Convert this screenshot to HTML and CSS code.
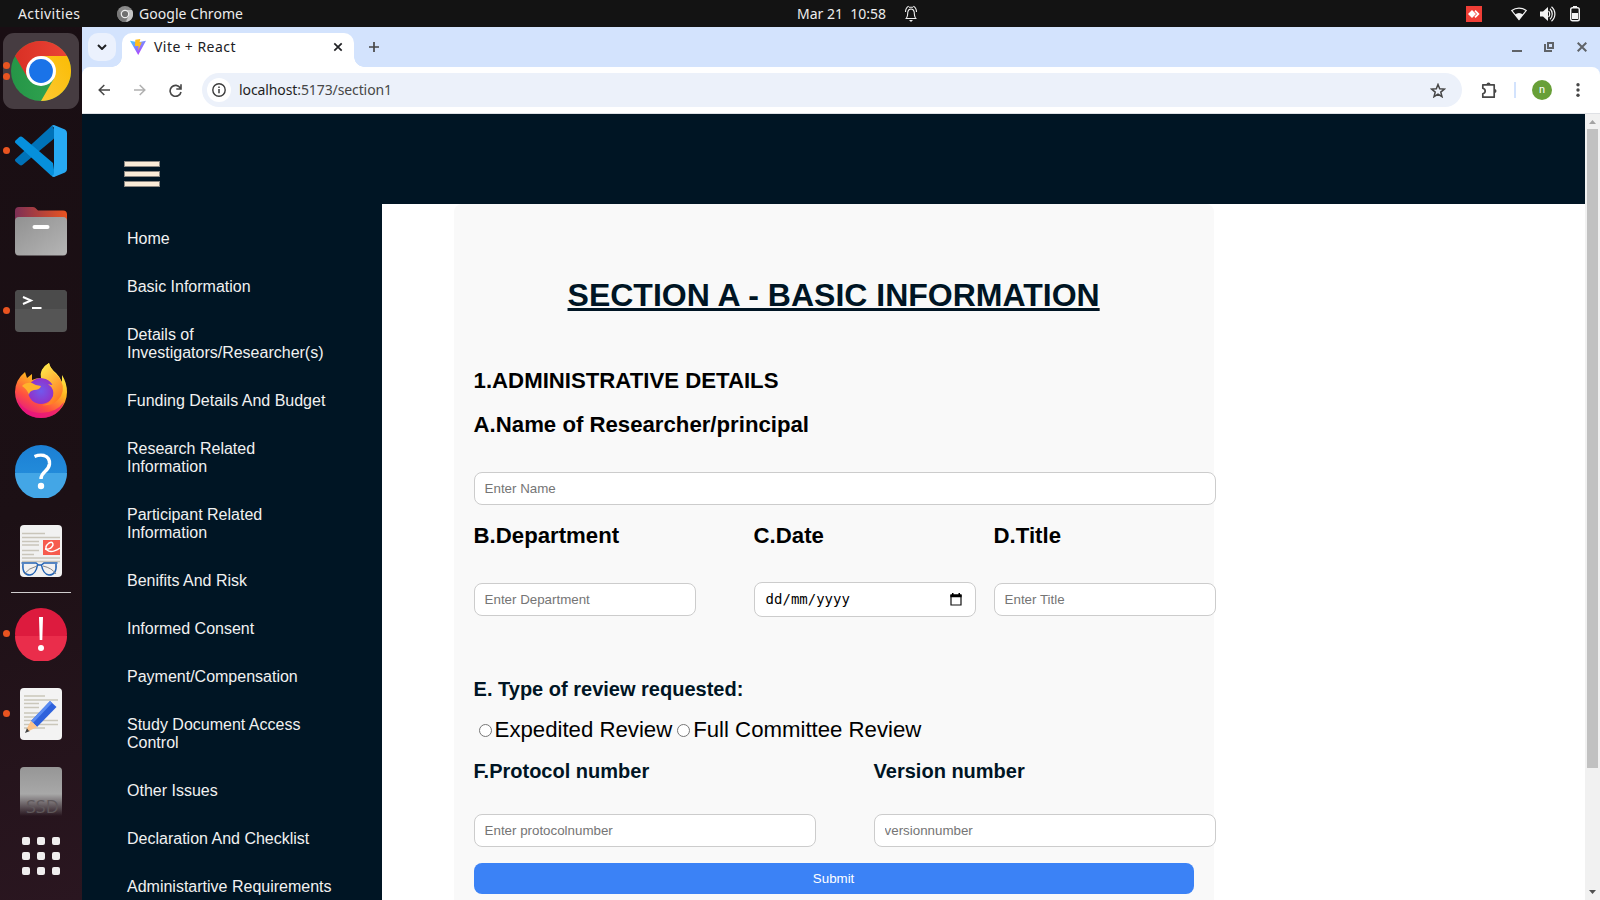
FILE: index.html
```html
<!DOCTYPE html>
<html lang="en">
<head>
<meta charset="utf-8">
<title>Vite + React</title>
<link rel="stylesheet" href="styles.css">
</head>
<body>
<header class="topbar">
  <div class="top-left">
    <span class="activities">Activities</span>
    <svg class="top-chrome" width="16" height="16" viewBox="0 0 16 16"><circle cx="8" cy="8" r="8" fill="#8a8a8a"/><path d="M8 4h7a8 8 0 0 1-6 12l2.500-6z" fill="#c4c4c4"/><path d="M1.300 4A8 8 0 0 0 7.500 16L10 12 5 10z" fill="#777"/><circle cx="8" cy="8" r="3.700" fill="#707070" stroke="#eee" stroke-width="1.200"/></svg>
    <span class="appname">Google Chrome</span>
  </div>
  <div class="top-center">
    <span class="clock">Mar 21&nbsp; 10:58</span>
    <svg width="14" height="18" viewBox="0 0 14 18" fill="none" stroke="#eee" stroke-width="1.100"><path d="M1.500 13.500h11M2.500 13c1.500-2 1-4 1.300-6C4.300 4.500 5.500 4 7 4s2.700.5 3.200 3c.3 2-.2 4 1.300 6"/><path d="M1.500 7c0-3.500 1.500-5 3.200-5.800M12.500 7c0-3.500-1.500-5-3.200-5.800M5 2.200h4"/><path d="M5 15h4l-2 2z" fill="#eee" stroke="none"/></svg>
  </div>
  <div class="top-right">
    <svg class="anydesk" width="16" height="16" viewBox="0 0 16 16"><path fill="#ef3e36" d="M0 0h16v16H0z"/><path fill="#fff" d="M2 8l4-4 4 4-4 4z"/><path d="M9 4.700 12.300 8 9 11.300" fill="none" stroke="#fff" stroke-width="1.800"/></svg>
    <svg class="wifi" width="16" height="14" viewBox="0 0 16 14"><path d="M.8 3.500C5 .2 11 .2 15.200 3.500L8 12.500z" fill="none" stroke="#f2f2f2" stroke-width="1.200"/><path d="M4 7.500c2.500-2 5.500-2 8 0L8 12.800z" fill="#f2f2f2"/></svg>
    <svg class="volume" width="16" height="16" viewBox="0 0 16 16"><path d="M0 5.500h3L8 1v14l-5-4.500H0z" fill="#f2f2f2"/><path d="M8.500 5c1.600 1.500 1.600 4.500 0 6M10 2.800c3 2.700 3 7.700 0 10.400M11.500.7c4.500 4 4.500 10.600 0 14.600" fill="none" stroke="#f2f2f2" stroke-width="1.200"/></svg>
    <svg width="10" height="16" viewBox="0 0 10 16"><path d="M3 0h4v2H3zM2 7h6v6H2z" fill="#f2f2f2"/><rect x=".7" y="1.700" width="8.600" height="13" rx="1.800" fill="none" stroke="#f2f2f2" stroke-width="1.400"/></svg>
  </div>
</header>
<div class="desktop">
  <aside class="dock">
    <div class="slot active">
      <i class="dot d1"></i><i class="dot d2"></i>
      <svg width="60" height="60" viewBox="0 0 60 60"><defs><linearGradient id="cr"><stop stop-color="#d93025"/><stop offset="1" stop-color="#ea4335"/></linearGradient><linearGradient id="cy" x1="0" y1="1" x2="1" y2="0"><stop stop-color="#fcc934"/><stop offset="1" stop-color="#fbbc04"/></linearGradient><linearGradient id="cg"><stop stop-color="#259547"/><stop offset="1" stop-color="#34a853"/></linearGradient></defs><circle cx="30" cy="30" r="30" fill="url(#cg)"/><path d="M4 15a30 30 0 0 1 52 0H30L17 37.500z" fill="url(#cr)"/><path d="M30 15h26A30 30 0 0 1 30 60l13-22.500z" fill="url(#cy)"/><circle cx="30" cy="30" r="15" fill="#fff"/><circle cx="30" cy="30" r="11.900" fill="#1a73e8"/></svg>
    </div>
    <div class="slot"><i class="dot"></i>
      <svg width="52" height="52" viewBox="0 0 52 52"><path d="M37 .5 42 10 38 14.500 8 39.500a3 3 0 0 1-4.200-.2L.8 36.700a2 2 0 0 1 0-3z" fill="#0072b8"/><path d="M38 38 8 12.600a3 3 0 0 0-4.200 0L.8 15.300a2 2 0 0 0 0 3L36 50.500l4 1z" fill="#0690dc"/><path d="M39 0v52q-1.500 0-2.700-1.500Q39 51 39 48V4q0-3-2.500-2.800Q37.500 0 39 0L50 4.500Q52 5.500 52 8v36q0 2.500-2 3.500L39 52z" fill="#27a9f3"/></svg>
    </div>
    <div class="slot">
      <svg width="52" height="50" viewBox="0 0 52 50"><defs><linearGradient id="fo"><stop stop-color="#7d2f55"/><stop offset="1" stop-color="#e95420"/></linearGradient><linearGradient id="fg" x2="1" y2="1"><stop stop-color="#919191"/><stop offset="1" stop-color="#b5b5b5"/></linearGradient></defs><path d="M0 5q0-4 4-4h14q2 0 3.500 2l1.500 1.500h25q4 0 4 4V20H0z" fill="url(#fo)"/><rect y="11" width="52" height="38.500" rx="4" fill="url(#fg)"/><rect x="17.500" y="19" width="17" height="4" rx="2" fill="#fff"/></svg>
    </div>
    <div class="slot"><i class="dot"></i>
      <svg width="52" height="42" viewBox="0 0 52 42"><rect width="52" height="42" rx="4" fill="#555"/><path d="M0 19V4q0-4 4-4h44q4 0 4 4v15z" fill="#4b4b4b"/><path d="m8 7 8 3.500L8 14M17 18h9.500" fill="none" stroke="#fff" stroke-width="2"/></svg>
    </div>
    <div class="slot firefox">
      <svg width="54" height="56" viewBox="0 0 54 56"><defs><linearGradient id="ff" x1=".8" y1=".1" x2=".3" y2="1"><stop stop-color="#fff44f"/><stop offset=".35" stop-color="#ffb520"/><stop offset=".7" stop-color="#ff5040"/><stop offset="1" stop-color="#e31587"/></linearGradient><linearGradient id="fy" x2=".5" y2="1"><stop stop-color="#fff44f"/><stop offset="1" stop-color="#ff7b24"/></linearGradient><radialGradient id="fp"><stop stop-color="#7059ed"/><stop offset="1" stop-color="#9132c9"/></radialGradient></defs><path d="M11 10Q12 13 13 16L18 12v6q4-2 9-2-1-10 8-15 1 5 7 10 4 4 6 9V13q5 8 5 17a26 26 0 1 1-52 0Q1 18 11 10z" fill="url(#ff)"/><circle cx="27" cy="29" r="13" fill="url(#fp)"/><path d="M35 1q-10 6-8 15 8 0 12 7-3 0-5-1 7 5 5 13-3 8-11 8 12 2 19-9 5-10-3-20Q36 7 35 1z" fill="url(#fy)"/><path d="M8 24q4-4 10-3 4 3 9 3-1 4-7 4-5 1-5 5-2-6-7-9z" fill="#ffb32b"/><path d="M3 36q7 15 24 15 15 0 23-11-6 16-23 16Q8 56 3 36z" fill="#e8127c" opacity=".7"/></svg>
    </div>
    <div class="slot">
      <svg width="54" height="54" viewBox="0 0 54 54"><defs><linearGradient id="hb" x1="0" y1="0" x2="0" y2="1"><stop stop-color="#1b7fd4"/><stop offset="1" stop-color="#2995df"/></linearGradient></defs><circle cx="27" cy="27" r="26" fill="url(#hb)"/><path d="M1 29h52a26 26 0 0 1-52 0z" fill="#43a6e6"/><path d="M20.500 12.500q5-2 9.500-1 6 2 5.500 8.500-.5 4-4.500 7.500-4 3.500-4 7.500" fill="none" stroke="#fff" stroke-width="3.400"/><circle cx="27" cy="42" r="3.200" fill="#fff"/></svg>
    </div>
    <div class="slot">
      <svg width="42" height="54" viewBox="0 0 42 54"><rect y="1" width="42" height="52" rx="4" fill="#f1f1f1"/><path d="M2 9.500h23M2 13.500h38M2 17.500h17M2 21h17M2 26.500h17M2 30.500h12M2 34h38M2 37.500h38" stroke="#c9c5ba" stroke-width="1.600"/><path fill="#f65b4e" d="M23 16h17v15H23z"/><path d="M25 25q6 1 8-4 0-4-4-2-5 4-2 7 4 4 13-2" stroke="#fff" stroke-width="1.500" fill="none"/><path d="M1.500 39H16l2.500 2h3L24 39h13.500M3 40q-1 11 7 11 6-1 7.500-10M36 40q1 11-7 11-6-1-7.500-10" stroke="#2363b4" stroke-width="1.500" fill="none"/><path d="M4 50q5-6 13-8M23 42q9 2 13 8" fill="none" stroke="#888"/></svg>
    </div>
    <div class="rule"></div>
    <div class="slot"><i class="dot"></i>
      <svg width="54" height="54" viewBox="0 0 54 54"><circle cx="27" cy="27" r="26" fill="#dd1b3e"/><path d="M1 29h52a26 26 0 0 1-52 0z" fill="#ea2d4b"/><path d="M25 10h4l-.7 23h-2.600z" fill="#fff"/><circle cx="27" cy="41" r="3" fill="#fff"/></svg>
    </div>
    <div class="slot"><i class="dot"></i>
      <svg width="42" height="54" viewBox="0 0 42 54"><rect y="1" width="42" height="52" rx="4" fill="#f3f3f3"/><path d="M4 9h21M4 13h34M4 16.500h15M4 20.500h15M4 26h15M4 30h12M4 33.500h34M4 37.500h34M4 41h21" stroke="#cac7bb" stroke-width="1.600"/><path d="M11 34 30 14l6.500 6L17 40z" fill="#2f62dc"/><path d="m11 34 6 6-9 3z" fill="#fcc38a"/><path d="m13 36 19-20-2-2-19 20z" fill="#5b8cf2"/><path d="m5 46 2-5 3 3z" fill="#444"/><path d="m11 34 6 6-8 4-2-3z" fill="#fcc38a"/></svg>
    </div>
    <div class="slot ssd">
      <svg width="42" height="49" viewBox="0 0 42 49"><defs><linearGradient id="sd" x2="0" y2="1"><stop stop-color="#969696"/><stop offset=".55" stop-color="#a8a8a8"/><stop offset="1" stop-color="#a8a8a8" stop-opacity="0"/></linearGradient></defs><path d="M0 49V4q0-4 4-4h34q4 0 4 4v45z" fill="url(#sd)"/><text x="6" y="45.500" class="ssd-text">SSD</text></svg>
    </div>
    <div class="apps"><i></i><i></i><i></i><i></i><i></i><i></i><i></i><i></i><i></i></div>
  </aside>
  <section class="browser">
    <div class="tabstrip">
      <div class="tabsearch"><svg width="10" height="6" viewBox="0 0 10 6"><path d="m1 1 4 4 4-4" fill="none" stroke="#202124" stroke-width="2"/></svg></div>
      <div class="tab">
        <svg class="vite" width="16" height="16" viewBox="0 0 16 16"><defs><linearGradient id="vp" x2=".7" y2="1"><stop stop-color="#41d1ff"/><stop offset="1" stop-color="#bd34fe"/></linearGradient></defs><path d="M0 1.800 8 3.200l8-1.400L8.200 16z" fill="url(#vp)"/><path d="m5.300.7 5-.7L9.500 3.600l2.300-.4-3.700 8.500.5-4.700H5z" fill="#ffbd1c"/></svg>
        <span class="tabtitle">Vite + React</span>
        <svg width="10" height="10" viewBox="0 0 10 10"><path d="m1.300 1.300 7.400 7.400m0-7.400L1.300 8.700" stroke="#202124" stroke-width="1.700"/></svg>
      </div>
      <svg class="plus" width="12" height="12" viewBox="0 0 12 12"><path d="M6 1v10M1 6h10" stroke="#474747" stroke-width="1.700"/></svg>
      <div class="winbtns">
        <svg width="10" height="12" viewBox="0 0 10 12"><path d="M0 9h10v2H0z" fill="#5f6368"/></svg>
        <svg width="10" height="10" viewBox="0 0 10 10"><path d="M4 1h5v5H4zM1 2v7h7" fill="none" stroke="#5f6368" stroke-width="2"/></svg>
        <svg width="10" height="10" viewBox="0 0 10 10"><path d="m.7.700 8.600 8.600m0-8.600L.7 9.300" stroke="#5f6368" stroke-width="2"/></svg>
      </div>
    </div>
    <div class="toolbar">
      <svg width="12" height="12" viewBox="0 0 12 12"><path d="M12 6H1.500M6.300 1 1.200 6l5.100 5" fill="none" stroke="#474747" stroke-width="1.500"/></svg>
      <svg width="12" height="12" viewBox="0 0 12 12"><path d="M0 6h10.500M5.700 1l5.100 5-5.100 5" fill="none" stroke="#b0b0b0" stroke-width="1.500"/></svg>
      <svg width="13" height="13" viewBox="0 0 13 13"><path d="M11.300 4A5.500 5.500 0 1 0 12 8M12 .3V5H7.300" fill="none" stroke="#474747" stroke-width="1.600"/></svg>
      <div class="omnibox">
        <div class="info"><svg width="14" height="14" viewBox="0 0 14 14"><circle cx="7" cy="7" r="6.200" fill="none" stroke="#3c3c3c" stroke-width="1.400"/><path d="M7 6v4.300M7 3.500v1.500" stroke="#3c3c3c" stroke-width="1.500"/></svg></div>
        <span class="url"><b>localhost</b>:5173/section1</span>
        <svg class="star" width="16" height="15" viewBox="0 0 16 15"><path d="m8 1.500 1.700 4.300 4.700.3-3.600 3 1.200 4.600L8 11.100l-4 2.600 1.200-4.600-3.600-3 4.700-.3z" fill="none" stroke="#474747" stroke-width="1.500"/></svg>
      </div>
      <svg class="ext" width="17" height="17" viewBox="0 0 17 17"><path d="M2 2.800h11.200v12.400H1.800v-3.500q2.400-.7 2.400-2.700T1.800 6.300V2.800z" fill="none" stroke="#474747" stroke-width="1.700" stroke-linejoin="round"/><path d="M5.500 2.500a2 2 0 0 1 4 0M13.500 7a2 2 0 0 1 0 4" fill="#474747"/></svg>
      <i class="sep"></i>
      <div class="avatar">n</div>
      <svg class="kebab" width="4" height="14" viewBox="0 0 4 14" fill="#474747"><circle cx="2" cy="1.700" r="1.700"/><circle cx="2" cy="7" r="1.700"/><circle cx="2" cy="12.300" r="1.700"/></svg>
    </div>
    <div class="viewport">
      <div class="page">
        <div class="banner"><div class="burger"><i></i><i></i><i></i></div></div>
        <div class="columns">
          <nav class="sidebar">
            <a>Home</a><a>Basic Information</a><a>Details of Investigators/Researcher(s)</a><a>Funding Details And Budget</a><a>Research Related Information</a><a>Participant Related Information</a><a>Benifits And Risk</a><a>Informed Consent</a><a>Payment/Compensation</a><a>Study Document Access Control</a><a>Other Issues</a><a>Declaration And Checklist</a><a>Administartive Requirements</a>
          </nav>
          <form class="form">
            <h1>SECTION A - BASIC INFORMATION</h1>
            <h2 class="admin">1.ADMINISTRATIVE DETAILS</h2>
            <h2 class="name">A.Name of Researcher/principal</h2>
            <input class="field full" placeholder="Enter Name">
            <div class="three">
              <div><h2>B.Department</h2><div class="slotfield"><input class="field" placeholder="Enter Department"></div></div>
              <div><h2>C.Date</h2><div class="slotfield"><div class="field date"><span>dd/mm/yyyy</span><svg width="12" height="13" viewBox="0 0 12 13"><path d="M1 2.500h10v9.500H1z" fill="none" stroke="#111" stroke-width="1.200"/><path d="M.4 1.200h11.200v3H.4zM2 0h1.500v2H2zM8.500 0H10v2H8.500z" fill="#000"/></svg></div></div></div>
              <div><h2>D.Title</h2><div class="slotfield"><input class="field" placeholder="Enter Title"></div></div>
            </div>
            <h3 class="review">E. Type of review requested:</h3>
            <div class="radios"><label><input type="radio" name="review">Expedited Review</label><label><input type="radio" name="review">Full Committee Review</label></div>
            <div class="two">
              <div><h3>F.Protocol number</h3><input class="field" placeholder="Enter protocolnumber"></div>
              <div><h3>Version number</h3><input class="field" placeholder="versionnumber"></div>
            </div>
            <button class="submit" type="button">Submit</button>
          </form>
        </div>
      </div>
      <div class="scrollbar">
        <svg width="7" height="4" viewBox="0 0 7 4"><path d="M0 4 3.500 0 7 4z" fill="#a3a3a3"/></svg>
        <i class="thumb"></i>
        <svg width="7" height="4" viewBox="0 0 7 4"><path d="m0 0 3.500 4L7 0z" fill="#505050"/></svg>
      </div>
    </div>
  </section>
</div>
</body>
</html>
```
FILE: styles.css
```css
* { box-sizing: border-box; }
body { margin: 0; width: 1600px; height: 900px; overflow: hidden; font-family: "Liberation Sans", Arial, sans-serif; background: #fff; }
svg { display: block; flex: none; }

/* Desktop top bar */
.topbar { height: 27px; background: #131313; color: #ececec; display: grid; grid-template-columns: 797px 1fr auto; font: 14px/27px "Noto Sans", sans-serif; white-space: nowrap; }
.top-left, .top-center, .top-right { display: flex; align-items: center; }
.activities { margin-left: 18px; width: 99px; letter-spacing: .4px; }
.appname { margin-left: 6px; letter-spacing: .05px; }
.clock { width: 107px; }
.top-right { padding-right: 20px; }
.anydesk { margin-right: 29px; }
.wifi { margin-right: 13px; }
.volume { margin-right: 14px; }

.desktop { display: flex; height: 873px; }

/* Dock */
.dock { width: 82px; flex: none; padding-top: 4px; background: linear-gradient(165deg, #190e13, #1c1015 55%, #2a1620); }
.slot { position: relative; height: 80px; display: flex; align-items: center; justify-content: center; }
.slot + .slot svg, .rule + .slot svg { margin-bottom: 1px; }
.slot.firefox svg { margin-bottom: 3px; }
.active::before { content: ""; position: absolute; inset: 2px 3px; border-radius: 11px; background: #463c41; }
.active svg { position: relative; }
.dot { position: absolute; z-index: 1; left: 3px; top: 36px; width: 7px; height: 7px; border-radius: 50%; background: #e95420; }
.d1 { top: 31px; }
.d2 { top: 41.500px; }
.rule { width: 60px; height: 1px; margin: 1px auto; background: #d0cdce; }
.ssd { height: 62px; align-items: flex-end; }
.slot + .ssd svg { margin-bottom: 0; overflow: visible; }
.ssd-text { font: 18px "Open Sans", sans-serif; fill: #5f585b; }
.apps { margin: 21px 0 0 22px; display: grid; grid-template-columns: repeat(3, 8px); gap: 7px; }
.apps i { height: 8px; border-radius: 2px; background: #f0eeee; }

/* Browser chrome */
.browser { flex: 1; min-width: 0; background: #d3e3fd; }
.tabstrip { height: 40px; display: flex; align-items: center; background: #d3e3fd; }
.tabsearch { width: 28px; height: 28px; margin-left: 6px; border-radius: 10px; background: #ebf1fd; display: flex; align-items: center; justify-content: center; }
.tab { position: relative; width: 232px; height: 34px; margin: 6px 0 0 6px; padding: 0 11px 6px 8px; border-radius: 10px 10px 0 0; background: #fff; display: flex; align-items: center; }
.tab::before, .tab::after { content: ""; position: absolute; bottom: 0; width: 10px; height: 10px; }
.tab::before { left: -10px; background: radial-gradient(circle at 0 0, transparent 9.500px, #fff 10px); }
.tab::after { right: -10px; background: radial-gradient(circle at 100% 0, transparent 9.500px, #fff 10px); }
.tabtitle { flex: 1; margin-left: 8px; font: 14px/20px "Noto Sans", sans-serif; letter-spacing: .45px; color: #202124; }
.plus { margin-left: 14px; }
.winbtns { margin-left: auto; padding-right: 13px; display: flex; align-items: center; gap: 23px; }
.winbtns svg:first-child { margin-right: -1px; }
.toolbar { height: 47px; padding-left: 16px; border-bottom: 1px solid #dfe1e5; border-radius: 8px 8px 0 0; background: #fff; display: flex; align-items: center; }
.toolbar > svg + svg { margin-left: 24px; }
.toolbar > svg:nth-child(3) { margin-left: 23px; }
.omnibox { width: 1260px; height: 34px; margin-left: 20px; padding: 0 16px 0 5px; border-radius: 17px; background: #ecf1fa; display: flex; align-items: center; }
.info { width: 24px; height: 24px; border-radius: 50%; background: #fff; display: flex; align-items: center; justify-content: center; }
.url { flex: 1; margin-left: 8px; font: 14px/20px "Noto Sans", sans-serif; letter-spacing: -.1px; color: #474747; }
.url b { font-weight: 400; color: #1f1f1f; }
.ext { margin-left: 19px; }
.sep { width: 2px; height: 16px; margin-left: 16px; background: #d3e3fd; }
.avatar { width: 20px; height: 20px; margin-left: 16px; border-radius: 50%; background: #689f38; color: #fff; font: 11px/19px Roboto, sans-serif; text-align: center; }
.kebab { margin-left: 24px; }

/* Web page */
.viewport { display: flex; height: 786px; background: #fff; overflow: hidden; }
.page { width: 1503px; flex: none; }
.banner { height: 90px; padding: 47px 0 0 42px; background: #001524; }
.burger { display: grid; gap: 4px; width: 36px; }
.burger i { height: 6px; background: #faebd7; border: 1px solid #8b8681; }
.columns { display: flex; height: 696px; }
.sidebar { width: 300px; padding: 11px 46px 0 45px; background: #001524; flex: none; }
.sidebar a { display: block; padding: 15px 0; font-size: 16px; line-height: 18px; color: #f1f1f1; }
.form { width: 760px; margin-left: 71.600px; padding: 73px 0 0 20px; border-radius: 8px 8px 0 0; background: #f9f9f9; }
h1, h2, h3 { margin: 0; white-space: nowrap; }
h1 { margin-left: -20px; font-size: 32px; line-height: 36px; text-align: center; text-decoration: underline; color: #001524; }
h2 { font-size: 22.200px; line-height: 26px; color: #000; }
h3 { font-size: 20px; line-height: 24px; color: #001524; }
.admin { margin-top: 55px; }
.name { margin-top: 18px; }
.field { display: block; width: 100%; height: 33px; padding: 8px 10px; border: 1px solid #ccc; border-radius: 8px; background: #fff; font: 13.333px "Liberation Sans", Arial, sans-serif; }
.full { width: 742px; margin: 34px 0 18px; }
.three { display: grid; grid-template-columns: 280px 240px 222px; width: 742px; }
.slotfield { width: 222px; margin-top: 33px; height: 35px; display: flex; align-items: center; }
.date { height: 35px; padding: 0 13px 0 11px; display: flex; align-items: center; justify-content: space-between; font: 14px "DejaVu Sans Mono", monospace; }
.date span { margin-bottom: 1px; }
.review { margin-top: 60px; }
.radios { margin-top: 16px; display: flex; font-size: 22.200px; line-height: 26px; white-space: nowrap; }
.radios input { margin: 3px 3px 0 5px; }
.two { margin-top: 16px; display: grid; grid-template-columns: 342px 342px; column-gap: 58px; }
.two .field { margin-top: 31px; }
.submit { display: block; width: 720px; height: 31px; margin-top: 16px; padding: 0; border: 0; border-radius: 8px; background: #3b82f6; color: #fff; font: 13.333px "Liberation Sans", Arial, sans-serif; }
.scrollbar { width: 15px; padding: 6px 0 6px; background: #f1f1f1; display: flex; flex-direction: column; align-items: center; }
.thumb { width: 11px; height: 639px; margin: 5px 0 auto; background: #c1c1c1; }
```
